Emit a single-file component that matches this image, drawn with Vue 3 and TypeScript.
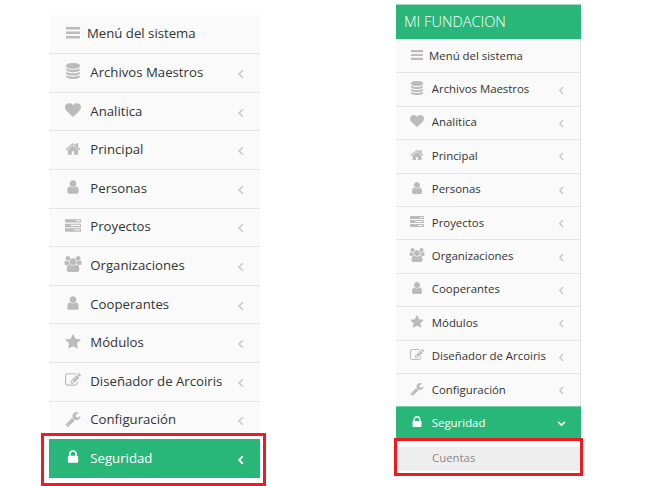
<script setup lang="ts">
interface Item {
  label: string
  icon: string
  active?: boolean
}

const icons: Record<string, string> = {
  database:
    'M896 768q237 0 443-43t325-127v170q0 69-103 128t-280 93.5-385 34.5-385-34.5-280-93.5-103-128v-170q119 84 325 127t443 43zm0 768q237 0 443-43t325-127v170q0 69-103 128t-280 93.5-385 34.5-385-34.5-280-93.5-103-128v-170q119 84 325 127t443 43zm0-384q237 0 443-43t325-127v170q0 69-103 128t-280 93.5-385 34.5-385-34.5-280-93.5-103-128v-170q119 84 325 127t443 43zm0-1152q208 0 385 34.5t280 93.5 103 128v128q0 69-103 128t-280 93.5-385 34.5-385-34.5-280-93.5-103-128v-128q0-69 103-128t280-93.5 385-34.5z',
  heart:
    'M896 1664q-26 0-44-18l-624-602q-10-8-27.5-26t-55.5-65.5-68-97.5-53.5-121-23.5-138q0-220 127-344t351-124q62 0 126.5 21.5t120 58 95.5 68.5 76 68q36-36 76-68t95.5-68.5 120-58 126.5-21.5q224 0 351 124t127 344q0 221-229 450l-623 600q-18 18-44 18z',
  home: 'M1472 992v480q0 26-19 45t-45 19h-384v-384h-256v384h-384q-26 0-45-19t-19-45v-480q0-1 .5-3t.5-3l575-474 575 474q1 2 1 6zm223-69l-62 74q-8 9-21 11h-3q-13 0-21-7l-692-577-692 577q-12 8-24 7-13-2-21-11l-62-74q-8-10-7-23.5t11-21.5l719-599q32-26 76-26t76 26l244 204v-195q0-14 9-23t23-9h192q14 0 23 9t9 23v408l219 182q10 8 11 21.5t-7 23.5z',
  user: 'M1536 1399q0 109-62.5 187t-150.5 78h-854q-88 0-150.5-78t-62.5-187q0-85 8.5-160.5t31.5-152 58.5-131 94-89 134.5-34.5q131 128 313 128t313-128q76 0 134.5 34.5t94 89 58.5 131 31.5 152 8.5 160.5zm-256-887q0 159-112.5 271.5t-271.5 112.5-271.5-112.5-112.5-271.5 112.5-271.5 271.5-112.5 271.5 112.5 112.5 271.5z',
  tasks:
    'M1024 1408h640v-128h-640v128zm-384-512h1024v-128h-1024v128zm640-512h384v-128h-384v128zm512 832v256q0 26-19 45t-45 19h-1664q-26 0-45-19t-19-45v-256q0-26 19-45t45-19h1664q26 0 45 19t19 45zm0-512v256q0 26-19 45t-45 19h-1664q-26 0-45-19t-19-45v-256q0-26 19-45t45-19h1664q26 0 45 19t19 45zm0-512v256q0 26-19 45t-45 19h-1664q-26 0-45-19t-19-45v-256q0-26 19-45t45-19h1664q26 0 45 19t19 45z',
  users:
    'M529 896q-162 5-265 128h-134q-82 0-138-40.5t-56-118.5q0-353 124-353 6 0 43.5 21t97.5 42.5 119 21.5q67 0 133-23-5 37-5 66 0 159 93 293zm1071 637q0 120-73 189.5t-194 69.5h-874q-121 0-194-69.5t-73-189.5q0-53 3.5-103.5t14-109 26.5-108.5 43-97.5 62-81 85.5-53.5 111.5-20q10 0 43 21.5t73 48 107 48 135 21.5 135-21.5 107-48 73-48 43-21.5q61 0 111.5 20t85.5 53.5 62 81 43 97.5 26.5 108.5 14 109 3.5 103.5zm-1024-1277q0 106-75 181t-181 75-181-75-75-181 75-181 181-75 181 75 75 181zm704 384q0 159-112.5 271.5t-271.5 112.5-271.5-112.5-112.5-271.5 112.5-271.5 271.5-112.5 271.5 112.5 112.5 271.5zm576 225q0 78-56 118.5t-138 40.5h-134q-103-123-265-128 93-134 93-293 0-29-5-66 66 23 133 23 59 0 119-21.5t97.5-42.5 43.5-21q124 0 124 353zm-128-609q0 106-75 181t-181 75-181-75-75-181 75-181 181-75 181 75 75 181z',
  star: 'M1728 647q0 22-26 48l-363 354 86 500q1 7 1 20 0 21-10.5 35.5t-30.5 14.5q-19 0-40-12l-449-236-449 236q-22 12-40 12-21 0-31.5-14.5t-10.5-35.5q0-6 2-20l86-500-364-354q-25-27-25-48 0-37 56-46l502-73 225-455q19-41 49-41t49 41l225 455 502 73q56 9 56 46z',
  edit: 'M888 1184l116-116-152-152-116 116v56h96v96h56zm440-720q-16-16-33 1l-350 350q-17 17-1 33t33-1l350-350q17-17 1-33zm80 594v190q0 119-84.5 203.5t-203.5 84.5h-832q-119 0-203.5-84.5t-84.5-203.5v-832q0-119 84.5-203.5t203.5-84.5h832q63 0 117 25 15 7 18 23 3 17-9 29l-49 49q-14 14-32 8-23-6-45-6h-832q-66 0-113 47t-47 113v832q0 66 47 113t113 47h832q66 0 113-47t47-113v-126q0-13 9-22l64-64q15-15 35-7t20 29zm-96-738l288 288-672 672h-288v-288zm444 132l-92 92-288-288 92-92q28-28 68-28t68 28l152 152q28 28 28 68t-28 68z',
  wrench:
    'M448 1472q0-26-19-45t-45-19-45 19-19 45 19 45 45 19 45-19 19-45zm644-420l-682 682q-37 37-90 37-52 0-91-37l-106-108q-38-36-38-90 0-53 38-91l681-681q39 98 114.5 173.5t173.5 114.5zm634-435q0 39-23 106-47 134-164.5 217.5t-258.5 83.5q-185 0-316.5-131.5t-131.5-316.5 131.5-316.5 316.5-131.5q58 0 121.5 16.5t107.5 46.5q16 11 16 28t-16 28l-293 169v224l193 107q5-3 79-48.5t135.5-81 70.5-35.5q15 0 23.5 10t8.5 25z',
  lock: 'M640 768h512v-192q0-106-75-181t-181-75-181 75-75 181v192zm832 96v576q0 40-28 68t-68 28h-960q-40 0-68-28t-28-68v-576q0-40 28-68t68-28h32v-192q0-184 132-316t316-132 316 132 132 316v192h32q40 0 68 28t28 68z',
}

const items: Item[] = [
  { label: 'Archivos Maestros', icon: 'database' },
  { label: 'Analitica', icon: 'heart' },
  { label: 'Principal', icon: 'home' },
  { label: 'Personas', icon: 'user' },
  { label: 'Proyectos', icon: 'tasks' },
  { label: 'Organizaciones', icon: 'users' },
  { label: 'Cooperantes', icon: 'user' },
  { label: 'Módulos', icon: 'star' },
  { label: 'Diseñador de Arcoiris', icon: 'edit' },
  { label: 'Configuración', icon: 'wrench' },
  { label: 'Seguridad', icon: 'lock', active: true },
]

const panels = [
  { name: 'large', title: '', open: false },
  { name: 'small', title: 'MI FUNDACION', open: true },
]
</script>

<template>
  <main class="page">
    <nav v-for="panel in panels" :key="panel.name" class="panel" :class="panel.name">
      <header v-if="panel.title" class="brand">{{ panel.title }}</header>
      <div class="row heading">
        <svg class="bars" viewBox="0 0 14 12" preserveAspectRatio="none">
          <path d="M0 1.3h14M0 6h14M0 10.7h14" />
        </svg>
        <span class="label">Menú del sistema</span>
      </div>
      <div v-for="item in items" :key="item.label" class="row" :class="{ active: item.active }">
        <svg class="icon" viewBox="0 0 1792 1792"><path :d="icons[item.icon]" /></svg>
        <span class="label">{{ item.label }}</span>
        <svg class="chevron" viewBox="0 0 10 10">
          <path :d="item.active && panel.open ? 'M1.2 3.2 5 6.8 8.8 3.2' : 'M6.8 1.2 3 5l3.8 3.8'" />
        </svg>
      </div>
      <div v-if="panel.open" class="submenu"><div class="entry">Cuentas</div></div>
      <div class="highlight"></div>
    </nav>
  </main>
</template>

<style>
body {
  margin: 0;
  background: #fff;
}
</style>

<style scoped>
.page {
  display: flex;
  align-items: flex-start;
  width: 653px;
  height: 486px;
  overflow: hidden;
  font-family: 'Open Sans', 'Noto Sans', sans-serif;
  color: #333;
}
.panel {
  position: relative;
  box-sizing: border-box;
  flex: none;
}
.large {
  --row: 38.6px;
  --icon: 16px;
  width: 211px;
  margin: 14.6px 0 0 49px;
  font-size: 13.2px;
}
.small {
  --row: 33.4px;
  --icon: 14px;
  width: 185px;
  margin: 4px 0 0 136px;
  font-size: 11.4px;
}
.brand {
  box-sizing: border-box;
  height: 35px;
  padding-left: 8px;
  border-top: 1px solid #a4dcc3;
  background: #29b779;
  color: #fff;
  font-size: 14.6px;
  font-weight: 300;
  line-height: 32px;
}
.row {
  display: flex;
  align-items: center;
  box-sizing: border-box;
  height: var(--row);
  padding-left: 16px;
  border-top: 1px solid #e5e5e5;
  background: #fafafa;
  white-space: nowrap;
}
.small .row {
  padding-left: 14px;
  border-right: 1px solid #e2e2e2;
}
.row.heading {
  border-top-color: #fafafa;
}
.icon {
  flex: none;
  width: var(--icon);
  height: var(--icon);
  margin: 0 9.3px 3px 0;
  fill: #bbb;
  overflow: visible;
}
.small .icon {
  margin-right: 7.8px;
}
.bars {
  flex: none;
  width: 14px;
  height: 11.4px;
  margin: 0 7px 2.6px 1px;
  stroke: #bbb;
  stroke-width: 2.6;
}
.small .bars {
  width: 12px;
  height: 10px;
  margin: 0 6px 2px 1px;
}
.label {
  flex: 1;
  padding-bottom: 2px;
}
.chevron {
  flex: none;
  width: 10px;
  height: 10px;
  margin: 2px 14.4px 0 0;
  fill: none;
  stroke: #c8c8c8;
  stroke-width: 1.5;
}
.small .chevron {
  width: 9px;
  height: 9px;
  margin: 1px 13.6px 0 0;
}
.row.active {
  border-color: #29b779;
  background: #29b779;
  color: #fff;
}
.small .row.active {
  border-top-color: #7acfa9;
}
.active .icon {
  fill: #fff;
}
.active .chevron {
  stroke: #fff;
  stroke-width: 1.8;
}
.submenu {
  padding-top: 7.2px;
}
.entry {
  height: 24px;
  padding-left: 36px;
  background: #eee;
  color: #888;
  line-height: 21px;
}
.highlight {
  position: absolute;
  box-sizing: border-box;
  border: 3px solid #ed1c24;
}
.large .highlight {
  top: 418.4px;
  left: -8px;
  width: 225px;
  height: 53px;
  box-shadow: inset 0 3px #fff;
}
.small .highlight {
  top: 434px;
  left: -2px;
  width: 189px;
  height: 38px;
}
</style>
